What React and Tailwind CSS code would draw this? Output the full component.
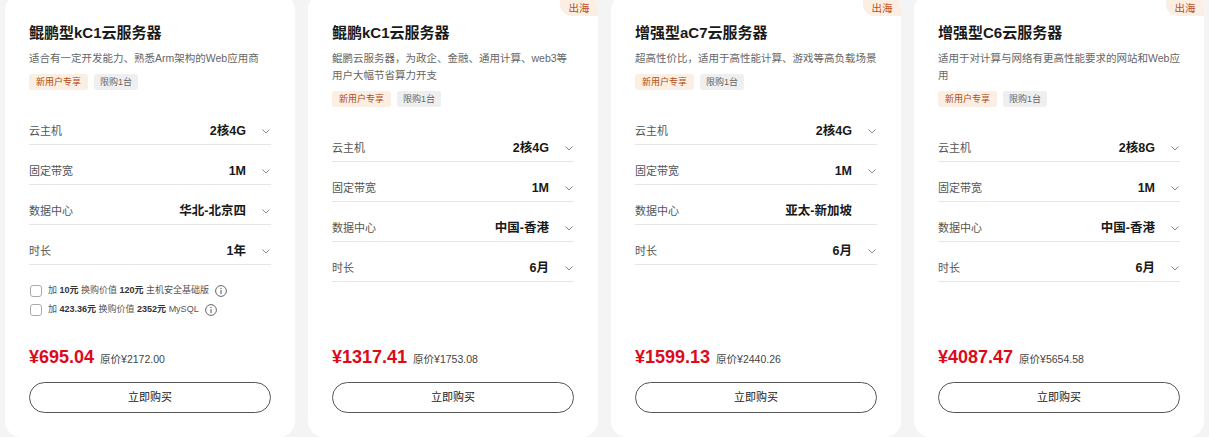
import React from "react";

const products = [
    {
        title: "鲲鹏型kC1云服务器",
        desc: "适合有一定开发能力、熟悉Arm架构的Web应用商",
        overseas: false,
        specs: [
            { label: "云主机", value: "2核4G", arrow: true },
            { label: "固定带宽", value: "1M", arrow: true },
            { label: "数据中心", value: "华北-北京四", arrow: true },
            { label: "时长", value: "1年", arrow: true },
        ],
        addons: [
            { add: "10元", worth: "120元", name: "主机安全基础版" },
            { add: "423.36元", worth: "2352元", name: "MySQL" },
        ],
        price: "¥695.04",
        origin: "¥2172.00",
    },
    {
        title: "鲲鹏kC1云服务器",
        desc: "鲲鹏云服务器，为政企、金融、通用计算、web3等用户大幅节省算力开支",
        overseas: true,
        specs: [
            { label: "云主机", value: "2核4G", arrow: true },
            { label: "固定带宽", value: "1M", arrow: true },
            { label: "数据中心", value: "中国-香港", arrow: true },
            { label: "时长", value: "6月", arrow: true },
        ],
        addons: [],
        price: "¥1317.41",
        origin: "¥1753.08",
    },
    {
        title: "增强型aC7云服务器",
        desc: "超高性价比，适用于高性能计算、游戏等高负载场景",
        overseas: true,
        specs: [
            { label: "云主机", value: "2核4G", arrow: true },
            { label: "固定带宽", value: "1M", arrow: true },
            { label: "数据中心", value: "亚太-新加坡", arrow: false },
            { label: "时长", value: "6月", arrow: true },
        ],
        addons: [],
        price: "¥1599.13",
        origin: "¥2440.26",
    },
    {
        title: "增强型C6云服务器",
        desc: "适用于对计算与网络有更高性能要求的网站和Web应用",
        overseas: true,
        specs: [
            { label: "云主机", value: "2核8G", arrow: true },
            { label: "固定带宽", value: "1M", arrow: true },
            { label: "数据中心", value: "中国-香港", arrow: true },
            { label: "时长", value: "6月", arrow: true },
        ],
        addons: [],
        price: "¥4087.47",
        origin: "¥5654.58",
    },
];

function Chevron() {
    return (
        <svg width="8" height="5" viewBox="0 0 8 5" fill="none">
            <path d="M0.5 0.5 L4 4 L7.5 0.5" stroke="#8a8a8a" strokeWidth="1" />
        </svg>
    );
}

function InfoIcon() {
    return (
        <svg width="12" height="12" viewBox="0 0 12 12" fill="none">
            <circle cx="6" cy="6" r="5.4" stroke="#666" strokeWidth="1" />
            <path d="M6 5 V9" stroke="#666" strokeWidth="1.1" />
            <circle cx="6" cy="3.4" r="0.7" fill="#666" />
        </svg>
    );
}

function ProductCard({ p }) {
    return (
        <div className="relative flex h-[443px] w-[290px] shrink-0 flex-col overflow-hidden rounded-2xl bg-white px-6 pt-[27px] pb-6">
            {p.overseas && (
                <div className="absolute top-0 right-0 h-[22px] w-[38px] rounded-bl-[12px] bg-[#fbeee2] pt-[6px] text-center text-[10.5px] leading-[16px] text-[#c1501a]">
                    出海
                </div>
            )}
            <h3 className="text-[15px] font-bold leading-[24px] text-[#191919]">
                {p.title}
            </h3>
            <p className="mt-[5px] text-[10.5px] leading-[17px] text-[#666]">
                {p.desc}
            </p>
            <div className="mt-[7px] flex gap-[6px]">
                <span className="h-4 rounded-[3px] bg-[#fbeee2] px-[7px] text-[9px] leading-4 text-[#b34a0c]">
                    新用户专享
                </span>
                <span className="h-4 rounded-[3px] bg-[#efefef] px-[6px] text-[9px] leading-4 text-[#666]">
                    限购1台
                </span>
            </div>

            <div className="mt-[15px]">
                {p.specs.map((s) => (
                    <div
                        key={s.label}
                        className="flex items-center border-b border-[#e6e6e6] pt-[18px] pb-[5px] leading-4">
                        <span className="flex-1 text-[11px] text-[#555]">
                            {s.label}
                        </span>
                        <span className="text-[12.5px] font-bold text-[#191919]">
                            {s.value}
                        </span>
                        <span className="flex w-[25px] justify-end pr-[1px]">
                            {s.arrow && <Chevron />}
                        </span>
                    </div>
                ))}
            </div>

            {p.addons.length > 0 && (
                <div className="mt-4">
                    {p.addons.map((a) => (
                        <div
                            key={a.name}
                            className="flex h-[19px] items-center text-[9px] text-[#555]">
                            <span className="mr-[6px] ml-[1px] h-3 w-3 rounded-[3px] border border-[#aaa] bg-white" />
                            <span>
                                加 <b className="text-[#333]">{a.add}</b> 换购价值{" "}
                                <b className="text-[#333]">{a.worth}</b> {a.name}
                            </span>
                            <span className="ml-[6px] flex">
                                <InfoIcon />
                            </span>
                        </div>
                    ))}
                </div>
            )}

            <div className="mt-auto">
                <div className="flex items-baseline gap-[6px] leading-[24px]">
                    <span className="text-[18px] font-bold text-[#dd0a1b]">
                        {p.price}
                    </span>
                    <span className="text-[10.5px] text-[#444]">
                        原价{p.origin}
                    </span>
                </div>
                <button className="mt-[11px] h-[31px] w-full rounded-full border border-[#555] text-[11px] text-[#222]">
                    立即购买
                </button>
            </div>
        </div>
    );
}

export default function App() {
    return (
        <div
            className="h-[437px] overflow-hidden bg-[#f4f4f4]"
            style={{ fontFamily: '"Liberation Sans", "Noto Sans CJK SC", sans-serif' }}>
            <div className="-mt-[6px] flex gap-[13px] px-[5px]">
                {products.map((p) => (
                    <ProductCard key={p.title} p={p} />
                ))}
            </div>
        </div>
    );
}
